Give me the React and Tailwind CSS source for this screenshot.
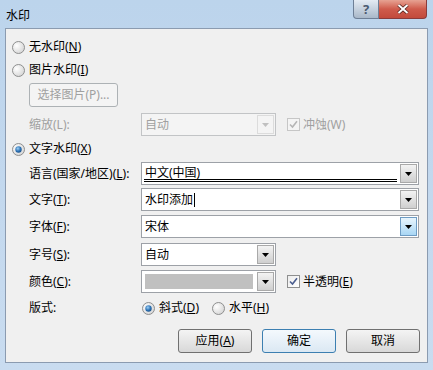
import React from "react";

const font = { fontFamily: '"Noto Sans", "Noto Sans CJK SC", sans-serif' };

function Radio({ checked }) {
  return (
    <svg width="13" height="13" viewBox="0 0 13 13" className="shrink-0">
      <defs>
        <radialGradient id="rg" cx="0.35" cy="0.35" r="0.8">
          <stop offset="0" stopColor="#ffffff" />
          <stop offset="1" stopColor="#d0d0d0" />
        </radialGradient>
        <radialGradient id="dot" cx="0.4" cy="0.35" r="0.7">
          <stop offset="0" stopColor="#9fd0f5" />
          <stop offset="0.6" stopColor="#2d73b6" />
          <stop offset="1" stopColor="#1b4f86" />
        </radialGradient>
      </defs>
      <circle cx="6.5" cy="6.5" r="6" fill="url(#rg)" stroke="#8e8f8f" strokeWidth="1" />
      {checked && <circle cx="6.5" cy="6.5" r="3.2" fill="url(#dot)" />}
    </svg>
  );
}

function Check({ disabled }) {
  return (
    <div
      className={`flex h-[13px] w-[13px] shrink-0 items-center justify-center border ${
        disabled ? "border-[#c6c6c6] bg-[#f4f4f4]" : "border-[#8e8f8f] bg-gradient-to-br from-[#ededed] to-[#ffffff]"
      }`}
    >
      <svg width="9" height="9" viewBox="0 0 9 9">
        <path
          d="M1 4.5 L3.5 7 L8 1.2"
          fill="none"
          stroke={disabled ? "#b5b5b5" : "#4b5e8f"}
          strokeWidth="1.6"
        />
      </svg>
    </div>
  );
}

function Arrow({ color = "#000" }) {
  return (
    <svg width="7" height="4" viewBox="0 0 7 4">
      <path d="M0 0 H7 L3.5 4 Z" fill={color} />
    </svg>
  );
}

function Combo({ wide, disabled, hot, children }) {
  return (
    <div
      className={`flex h-[23px] shrink-0 border ${wide ? "w-[278px]" : "w-[135px]"} ${
        disabled ? "border-[#c2c4c6] bg-[#f4f4f4]" : "border-[#9da1a7] bg-white"
      }`}
    >
      <div className="relative flex min-w-0 flex-1 items-center px-[3px]">{children}</div>
      <div
        className={`m-[1px] flex w-[17px] items-center justify-center border ${
          disabled
            ? "border-[#dcdcdc] bg-[#f4f4f4]"
            : hot
            ? "border-[#6e9cc4] bg-gradient-to-b from-[#e8f5fd] to-[#a8d6f4]"
            : "border-[#a9a9a9] bg-gradient-to-b from-[#f3f3f3] to-[#cfcfcf]"
        }`}
      >
        <Arrow color={disabled ? "#c0c0c0" : "#000"} />
      </div>
    </div>
  );
}

function Btn({ children, def }) {
  return (
    <div
      className={`flex h-[24px] w-[74px] items-center justify-center rounded-[3px] border ${
        def
          ? "border-[#3c7fb1] bg-gradient-to-b from-[#f4f9fd] to-[#dbe8f3] text-black"
          : "border-[#707070] bg-gradient-to-b from-[#f4f4f4] to-[#d8d8d8] text-black"
      }`}
    >
      {children}
    </div>
  );
}

function Row({ label, children, h = "h-[23px]", mt }) {
  return (
    <div className={`flex items-center ${h} ${mt}`}>
      <div className="w-[135px] shrink-0 whitespace-nowrap pl-[23px]">{label}</div>
      {children}
    </div>
  );
}

export default function App() {
  return (
    <div
      className="flex h-[370px] w-[433px] flex-col overflow-hidden bg-gradient-to-b from-[#bcd4ec] to-[#c9dcf0] text-[12px] leading-none text-black"
      style={font}
    >
      {/* title bar */}
      <div className="flex h-[28px] shrink-0">
        <div className="flex flex-1 items-center pl-[6px] pt-[4px] text-[12px]">水印</div>
        <div className="flex h-[19px] items-start pr-[6px]">
          <div className="flex h-[19px] w-[26px] items-center justify-center rounded-bl-[4px] border border-t-0 border-[#6e7f96] bg-gradient-to-b from-[#e4ebf3] to-[#a9b8c9] text-[13px] font-bold text-[#4a5a70]">
            ?
          </div>
          <div className="flex h-[19px] w-[48px] items-center justify-center rounded-br-[4px] border border-l-0 border-t-0 border-[#8a3b3b] bg-gradient-to-b from-[#e6a293] via-[#cf5b4c] to-[#c24a3c]">
            <svg width="12" height="10" viewBox="0 0 12 10">
              <path d="M1.5 1 L10.5 9 M10.5 1 L1.5 9" stroke="#4a1e1a" strokeWidth="3.4" />
              <path d="M1.5 1 L10.5 9 M10.5 1 L1.5 9" stroke="#ffffff" strokeWidth="2" />
            </svg>
          </div>
        </div>
      </div>

      {/* client */}
      <div className="ml-[5px] mr-[5px] flex h-[335px] shrink-0 flex-col border border-[#8b9bb0] bg-[#f0f0f0] pt-[10px]">
        <div className="flex h-[16px] items-center gap-[4px] pl-[6px]">
          <Radio />
          <span>
            无水印(<u>N</u>)
          </span>
        </div>
        <div className="mt-[7px] flex h-[16px] items-center gap-[4px] pl-[6px]">
          <Radio />
          <span>
            图片水印(<u>I</u>)
          </span>
        </div>
        <div className="mt-[5px] flex pl-[23px]">
          <div className="flex h-[24px] w-[89px] items-center justify-center rounded-[3px] border border-[#adb2b5] bg-[#f4f4f4] text-[#a0a0a0]">
            选择图片(P)...
          </div>
        </div>
        <Row label={<span className="text-[#a0a0a0]">缩放(L):</span>} mt="mt-[6px]">
          <Combo disabled>
            <span className="text-[#a0a0a0]">自动</span>
          </Combo>
          <div className="ml-[11px] flex items-center gap-[3px] text-[#a0a0a0]">
            <Check disabled />
            <span>冲蚀(W)</span>
          </div>
        </Row>
        <div className="mt-[5px] flex h-[16px] items-center gap-[4px] pl-[6px]">
          <Radio checked />
          <span>
            文字水印(<u>X</u>)
          </span>
        </div>
        <Row
          label={
            <span>
              语言(国家/地区)(<u>L</u>):
            </span>
          }
          mt="mt-[5px]"
        >
          <Combo wide>
            <span className="mb-[2px]">中文(中国)</span>
            <div className="absolute bottom-[2px] left-[2px] right-[2px] h-[3px] border-y border-black" />
          </Combo>
        </Row>
        <Row
          label={
            <span>
              文字(<u>T</u>):
            </span>
          }
          mt="mt-[3px]"
        >
          <Combo wide>
            <span>水印添加</span>
            <span className="ml-[1px] h-[14px] w-[1px] bg-black" />
          </Combo>
        </Row>
        <Row
          label={
            <span>
              字体(<u>F</u>):
            </span>
          }
          mt="mt-[4px]"
        >
          <Combo wide hot>
            <span>宋体</span>
          </Combo>
        </Row>
        <Row
          label={
            <span>
              字号(<u>S</u>):
            </span>
          }
          mt="mt-[5px]"
        >
          <Combo>
            <span>自动</span>
          </Combo>
        </Row>
        <Row
          label={
            <span>
              颜色(<u>C</u>):
            </span>
          }
          mt="mt-[4px]"
        >
          <Combo>
            <div className="h-[15px] w-[111px] bg-[#c0c0c0]" />
          </Combo>
          <div className="ml-[11px] flex items-center gap-[3px]">
            <Check />
            <span>
              半透明(<u>E</u>)
            </span>
          </div>
        </Row>
        <Row label={<span>版式:</span>} h="h-[16px]" mt="mt-[7px]">
          <div className="ml-[1px] flex items-center gap-[4px]">
            <Radio checked />
            <span>
              斜式(<u>D</u>)
            </span>
          </div>
          <div className="ml-[13px] flex items-center gap-[4px]">
            <Radio />
            <span>
              水平(<u>H</u>)
            </span>
          </div>
        </Row>
        <div className="mt-[13px] flex justify-end gap-[10px] pr-[7px]">
          <Btn>
            应用(<u>A</u>)
          </Btn>
          <Btn def>确定</Btn>
          <Btn>取消</Btn>
        </div>
      </div>
    </div>
  );
}
